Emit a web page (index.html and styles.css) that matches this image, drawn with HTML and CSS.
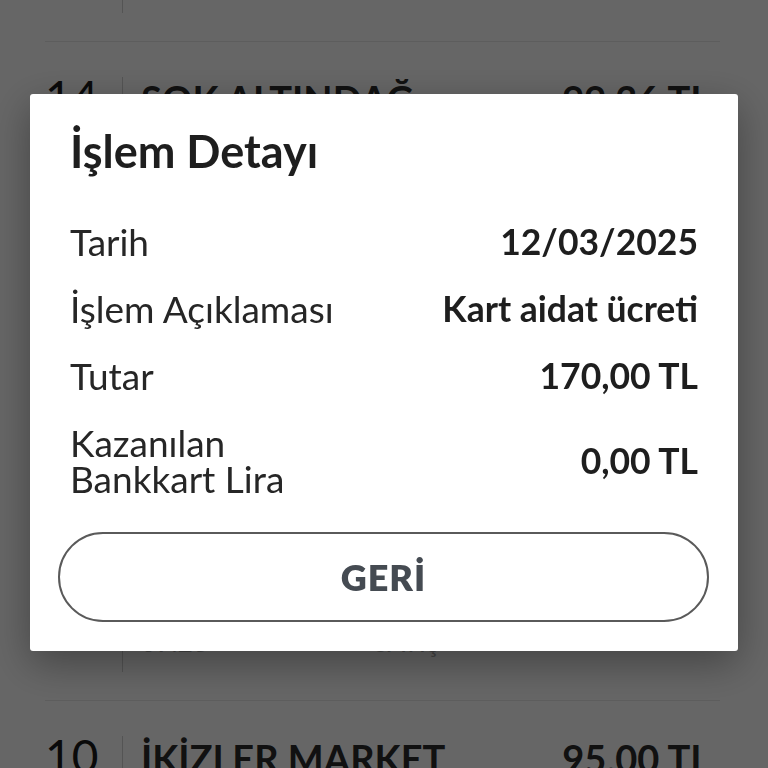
FILE: index.html
```html
<!DOCTYPE html>
<html lang="tr">
<head>
    <meta charset="UTF-8">
    <meta name="viewport" content="width=device-width, initial-scale=1.0">
    <title>İşlem Detayı</title>
    <link rel="stylesheet" href="styles.css">
</head>
<body>
    <div class="tx-list">
        <div class="tx-row">
            <div class="tx-day">15</div>
            <div class="tx-body">
                <div class="tx-main"><span class="tx-name">MİGROS ÇANKAYA</span><span class="tx-amount">212,40 TL</span></div>
                <div class="tx-meta">15/03/2025</div>
                <div class="tx-meta"><span>18:42</span><span>Alışveriş</span></div>
            </div>
        </div>
        <div class="tx-row">
            <div class="tx-day">14</div>
            <div class="tx-body">
                <div class="tx-main"><span class="tx-name">ŞOK ALTINDAĞ</span><span class="tx-amount">99,36 TL</span></div>
                <div class="tx-meta">14/03/2025</div>
                <div class="tx-meta"><span>12:05</span><span>Alışveriş</span></div>
            </div>
        </div>
        <div class="tx-row">
            <div class="tx-day">12</div>
            <div class="tx-body">
                <div class="tx-main"><span class="tx-name">KART AİDAT</span><span class="tx-amount">170,00 TL</span></div>
                <div class="tx-meta">12/03/2025</div>
                <div class="tx-meta"><span>00:00</span><span>Ücret</span></div>
            </div>
        </div>
        <div class="tx-row">
            <div class="tx-day">11</div>
            <div class="tx-body">
                <div class="tx-main"><span class="tx-name">A101 KEÇİÖREN</span><span class="tx-amount">64,75 TL</span></div>
                <div class="tx-meta">11/03/2025</div>
                <div class="tx-meta"><span>09:28</span><span>SATIŞ</span></div>
            </div>
        </div>
        <div class="tx-row">
            <div class="tx-day">10</div>
            <div class="tx-body">
                <div class="tx-main"><span class="tx-name">İKİZLER MARKET</span><span class="tx-amount">95,00 TL</span></div>
                <div class="tx-meta">10/03/2025</div>
                <div class="tx-meta"><span>17:10</span><span>Alışveriş</span></div>
            </div>
        </div>
    </div>

    <div class="overlay">
        <div class="dialog">
            <h1 class="dialog-title">İşlem Detayı</h1>
            <div class="detail-list">
                <div class="detail-row">
                    <span class="detail-label">Tarih</span>
                    <span class="detail-value">12/03/2025</span>
                </div>
                <div class="detail-row">
                    <span class="detail-label">İşlem Açıklaması</span>
                    <span class="detail-value">Kart aidat ücreti</span>
                </div>
                <div class="detail-row">
                    <span class="detail-label">Tutar</span>
                    <span class="detail-value">170,00 TL</span>
                </div>
                <div class="detail-row">
                    <span class="detail-label">Kazanılan<br>Bankkart Lira</span>
                    <span class="detail-value">0,00 TL</span>
                </div>
            </div>
            <button class="back-btn">GERİ</button>
        </div>
    </div>
</body>
</html>
```

FILE: styles.css
```css
body {
    margin: 0;
    font-family: Lato, "Open Sans", sans-serif;
    background: #ffffff;
    overflow: hidden;
    height: 768px;
}
.tx-list {
    margin-top: -178.67px;
    padding: 0 48px 0 45px;
}
.tx-row {
    display: flex;
    height: 219.67px;
    box-sizing: border-box;
    padding: 35px 0 28px;
    border-top: 1px solid #e8e8e8;
}
.tx-day {
    width: 77px;
    font-size: 46px;
    font-weight: 400;
    line-height: 40px;
    color: #1a1a1a;
}
.tx-body {
    flex: 1;
    display: flex;
    flex-direction: column;
    border-left: 1px solid #d2d2d2;
    padding: 0 10px 0 18px;
}
.tx-main {
    display: flex;
    justify-content: space-between;
    font-size: 38px;
    font-weight: 700;
    line-height: 44px;
    color: #2b2b2b;
}
.tx-meta {
    display: flex;
    gap: 166px;
    font-size: 26px;
    line-height: 55px;
    color: #b0b0b0;
}
.overlay {
    position: fixed;
    top: 0;
    left: 0;
    right: 0;
    bottom: 0;
    background: rgba(0, 0, 0, 0.6);
    display: flex;
    justify-content: center;
    align-items: flex-start;
    padding-top: 94px;
}
.dialog {
    width: 708px;
    box-sizing: border-box;
    background: #ffffff;
    border-radius: 3px;
    padding: 31px 29px 29px 28px;
    box-shadow: 0 12px 40px rgba(0, 0, 0, 0.35);
}
.dialog-title {
    margin: 0 12px;
    font-size: 45px;
    font-weight: 700;
    line-height: 52px;
    color: #1e1e1e;
}
.detail-list {
    display: flex;
    flex-direction: column;
    gap: 31px;
    padding: 0 11px 0 12px;
    margin-top: 47px;
}
.detail-row {
    display: flex;
    justify-content: space-between;
    align-items: center;
    font-size: 37px;
    line-height: 36px;
    color: #262626;
}
.detail-value {
    font-size: 35.5px;
    font-weight: 700;
    color: #1e1e1e;
}
.back-btn {
    display: block;
    width: 100%;
    height: 90px;
    margin-top: 35px;
    border: 2px solid #5a5a5a;
    border-radius: 45px;
    background: #ffffff;
    font-family: Lato, "Open Sans", sans-serif;
    font-size: 36px;
    font-weight: 800;
    letter-spacing: 1px;
    color: #454b52;
}
```
